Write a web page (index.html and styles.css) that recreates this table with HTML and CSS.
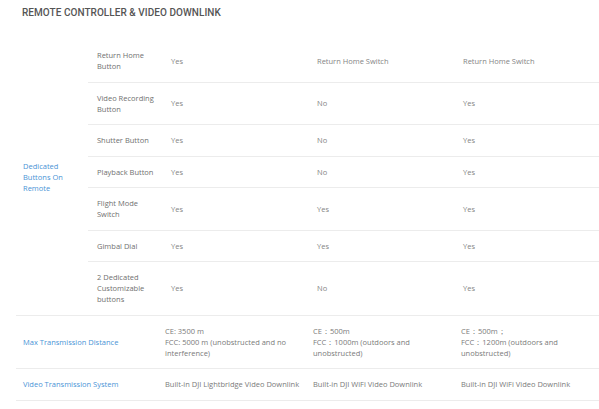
FILE: index.html
```html
<!DOCTYPE html>
<html>
<head>
<meta charset="utf-8">
<link rel="stylesheet" href="styles.css">
</head>
<body>
<div class="page">
  <h2 class="title">REMOTE CONTROLLER &amp; VIDEO DOWNLINK</h2>
  <div class="spec spec-top">
    <div class="group">Dedicated<br>Buttons On<br>Remote</div>
    <div class="sub">Return Home<br>Button</div><div class="val">Yes</div><div class="val">Return Home Switch</div><div class="val">Return Home Switch</div>
    <div class="sub">Video Recording<br>Button</div><div class="val">Yes</div><div class="val">No</div><div class="val">Yes</div>
    <div class="sub">Shutter Button</div><div class="val">Yes</div><div class="val">No</div><div class="val">Yes</div>
    <div class="sub">Playback Button</div><div class="val">Yes</div><div class="val">No</div><div class="val">Yes</div>
    <div class="sub">Flight Mode<br>Switch</div><div class="val">Yes</div><div class="val">Yes</div><div class="val">Yes</div>
    <div class="sub">Gimbal Dial</div><div class="val">Yes</div><div class="val">Yes</div><div class="val">Yes</div>
    <div class="sub">2 Dedicated<br>Customizable<br>buttons</div><div class="val">Yes</div><div class="val">No</div><div class="val">Yes</div>
  </div>
  <div class="spec spec-bottom">
    <div class="label">Max Transmission Distance</div>
    <div class="cell">CE: 3500 m<br>FCC: 5000 m (unobstructed and no<br>interference)</div>
    <div class="cell">CE：500m<br>FCC：1000m (outdoors and<br>unobstructed)</div>
    <div class="cell">CE：500m；<br>FCC：1200m (outdoors and<br>unobstructed)</div>
    <div class="label">Video Transmission System</div>
    <div class="cell">Built-in DJI Lightbridge Video Downlink</div>
    <div class="cell">Built-in DJI WiFi Video Downlink</div>
    <div class="cell">Built-in DJI WiFi Video Downlink</div>
  </div>
</div>
</body>
</html>
```
FILE: styles.css
```css
html, body {
  margin: 0;
  padding: 0;
  background: #fff;
  overflow: hidden;
}
.page {
  width: 599px;
  overflow: hidden;
  font-family: "Open Sans", "Noto Sans", sans-serif;
  font-size: 7.5px;
  line-height: 11px;
  color: #858585;
}
.title {
  margin: 0;
  padding: 7px 0 0 22px;
  height: 33px;
  box-sizing: border-box;
  font-family: Roboto, "Liberation Sans", Arial, sans-serif;
  font-weight: 500;
  font-size: 10px;
  line-height: 12px;
  letter-spacing: 0.05px;
  color: #555;
}
.spec {
  display: grid;
  margin-left: 16px;
  width: 660px;
}
.spec-top {
  margin-top: 7px;
  grid-template-columns: 72px 74px 146px 146px 222px;
}
.spec-bottom {
  grid-template-columns: 142px 148px 148px 222px;
}
.spec > div {
  border-bottom: 1px solid #ececec;
  padding: 10px 0 9.5px 9px;
  display: flex;
  flex-direction: column;
  justify-content: center;
}
.group {
  grid-row: span 7;
  color: #4a94d6;
  padding-left: 7px !important;
}
.sub {
  color: #707070;
}
.label {
  color: #4a94d6;
  padding-left: 7px !important;
}
.spec-bottom .cell {
  padding-left: 7px;
  color: #7a7a7a;
}
```
